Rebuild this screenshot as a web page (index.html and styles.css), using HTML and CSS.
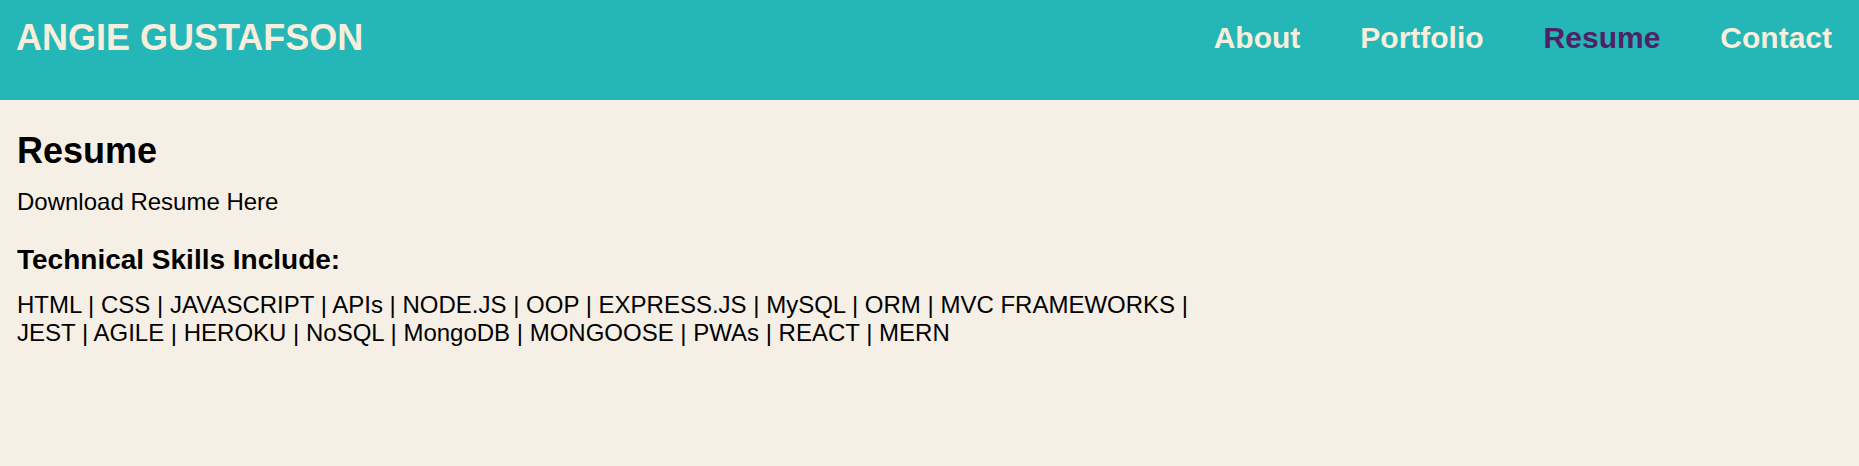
FILE: index.html
```html
<!DOCTYPE html>
<html lang="en">
<head>
<meta charset="utf-8">
<title>Angie Gustafson - Resume</title>
<link rel="stylesheet" href="styles.css">
</head>
<body>
<header class="site-header">
  <h1 class="brand">ANGIE GUSTAFSON</h1>
  <nav class="nav">
    <a class="nav-link" href="#">About</a>
    <a class="nav-link" href="#">Portfolio</a>
    <a class="nav-link active" href="#">Resume</a>
    <a class="nav-link" href="#">Contact</a>
  </nav>
</header>
<main class="content">
  <h2 class="title">Resume</h2>
  <p class="download">Download Resume Here</p>
  <h3 class="subtitle">Technical Skills Include:</h3>
  <p class="skills">HTML | CSS | JAVASCRIPT | APIs | NODE.JS | OOP | EXPRESS.JS | MySQL | ORM | MVC FRAMEWORKS | JEST | AGILE | HEROKU | NoSQL | MongoDB | MONGOOSE | PWAs | REACT | MERN</p>
</main>
</body>
</html>
```

FILE: styles.css
```css
html, body {
  margin: 0;
  padding: 0;
}
body {
  background: #f6efe6;
  font-family: "Liberation Sans", Arial, sans-serif;
  color: #000;
  min-height: 466px;
}
.site-header {
  background: #25b6b7;
  height: 100px;
  box-sizing: border-box;
  display: flex;
  justify-content: space-between;
  align-items: flex-start;
  padding: 17px 27px 0 16px;
}
.brand {
  margin: 0;
  font-size: 36px;
  font-weight: bold;
  color: #f7eedb;
}
.nav {
  display: flex;
  gap: 60px;
  margin-top: 4px;
}
.nav-link {
  font-size: 30px;
  font-weight: bold;
  color: #f7eedb;
  text-decoration: none;
}
.nav-link.active {
  color: #4f2268;
}
.content {
  padding: 30px 16px 0 17px;
}
.title {
  margin: 0 0 16px;
  font-size: 36px;
  font-weight: bold;
}
.download {
  margin: 0 0 28px;
  font-size: 24px;
}
.subtitle {
  margin: 0 0 15px;
  font-size: 28px;
  font-weight: bold;
}
.skills {
  margin: 0;
  font-size: 24px;
  max-width: 1210px;
}
```
